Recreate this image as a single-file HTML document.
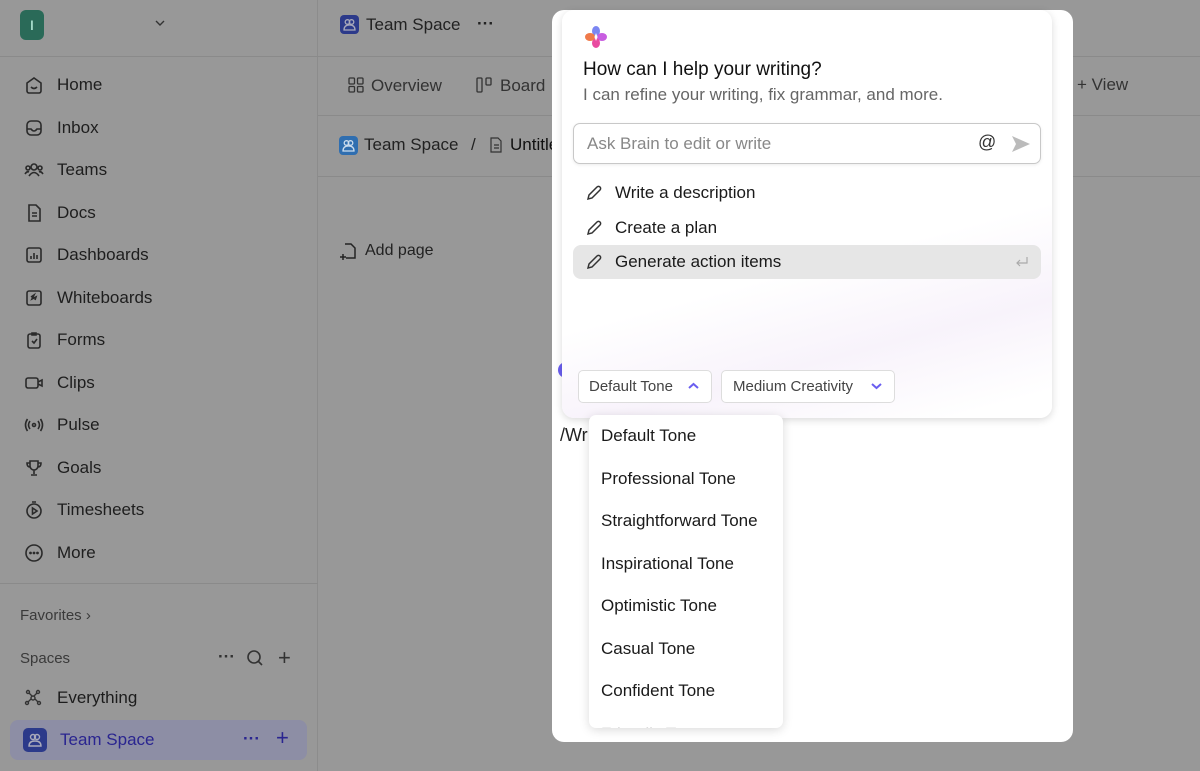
<!DOCTYPE html>
<html><head><style>
*{margin:0;padding:0;box-sizing:border-box}
body{width:1200px;height:771px;overflow:hidden;background:#989898;font-family:"Liberation Sans",sans-serif;color:#1c1c1c;position:relative}
.abs{position:absolute}
.sb{left:0;top:0;width:318px;height:771px;border-right:1px solid #8c8c8c}
.nav{position:absolute;left:24px;font-size:17px;display:flex;align-items:center;gap:13px;color:#1e1e1e}
.nav svg{width:20px;height:20px;fill:none;stroke:#2a2a2a;stroke-width:1.6}
.hl{position:absolute;height:1px;background:#8a8a8a}
.drop div{height:42.5px;line-height:42.5px;padding-left:12px;font-size:17px;color:#1a1a1a}
.pen{width:18px;height:18px;fill:none;stroke:#333;stroke-width:1.5}
.sug{position:absolute;left:573px;width:468px;height:34px;display:flex;align-items:center;gap:12px;padding-left:12px;font-size:17px;color:#1a1a1a}
</style></head><body>
<div class="abs sb"></div>
<div class="abs" style="left:20px;top:10px;width:24px;height:30px;background:#2a6a58;border-radius:6px;color:#cfe;font-size:14px;text-align:center;line-height:30px">I</div>
<svg class="abs" style="left:154px;top:19px" width="12" height="8" fill="none" stroke="#333" stroke-width="1.4"><path d="M2 2l4 4 4-4"/></svg>
<div class="hl" style="left:0;top:56px;width:318px"></div>
<div class="nav" style="top:75px"><svg viewBox="0 0 20 20"><path d="M3 8l7-5 7 5v8a2 2 0 01-2 2H5a2 2 0 01-2-2z"/><path d="M7 12q3 3 6 0"/></svg>Home</div>
<div class="nav" style="top:118px"><svg viewBox="0 0 20 20"><rect x="3" y="3" width="14" height="14" rx="4"/><path d="M3 11h4q3 4 6 0h4"/></svg>Inbox</div>
<div class="nav" style="top:160px"><svg viewBox="0 0 20 20"><circle cx="10" cy="7" r="3"/><circle cx="4" cy="8" r="2"/><circle cx="16" cy="8" r="2"/><path d="M5 16q5-7 10 0M1 14q2-3 4-2M19 14q-2-3-4-2"/></svg>Teams</div>
<div class="nav" style="top:203px"><svg viewBox="0 0 20 20"><path d="M5 2h7l4 4v12H5z"/><path d="M8 10h5M8 13h5"/></svg>Docs</div>
<div class="nav" style="top:245px"><svg viewBox="0 0 20 20"><rect x="3" y="3" width="14" height="14" rx="2"/><path d="M7 14v-3M10 14V8M13 14v-4"/></svg>Dashboards</div>
<div class="nav" style="top:288px"><svg viewBox="0 0 20 20"><rect x="3" y="3" width="14" height="14" rx="2"/><path d="M7 9l3-2-2 4 4-2-1 3"/></svg>Whiteboards</div>
<div class="nav" style="top:330px"><svg viewBox="0 0 20 20"><rect x="4" y="4" width="12" height="14" rx="2"/><path d="M8 3h4v2H8zM8 11l2 2 3-4"/></svg>Forms</div>
<div class="nav" style="top:373px"><svg viewBox="0 0 20 20"><rect x="2" y="5" width="12" height="10" rx="2"/><path d="M14 9l4-2v6l-4-2"/></svg>Clips</div>
<div class="nav" style="top:415px"><svg viewBox="0 0 20 20"><circle cx="10" cy="10" r="1.5"/><path d="M6 6q-3 4 0 8M14 6q3 4 0 8M3.5 4q-4 6 0 12M16.5 4q4 6 0 12"/></svg>Pulse</div>
<div class="nav" style="top:458px"><svg viewBox="0 0 20 20"><path d="M6 3h8v5a4 4 0 01-8 0zM6 5H3q0 4 3 4M14 5h3q0 4-3 4M10 12v4M7 17h6"/></svg>Goals</div>
<div class="nav" style="top:500px"><svg viewBox="0 0 20 20"><circle cx="10" cy="11" r="7"/><path d="M8.5 8v6l4.5-3zM8 2h4"/></svg>Timesheets</div>
<div class="nav" style="top:543px"><svg viewBox="0 0 20 20"><circle cx="10" cy="10" r="8"/><circle cx="6.5" cy="10" r=".6" fill="#2a2a2a"/><circle cx="10" cy="10" r=".6" fill="#2a2a2a"/><circle cx="13.5" cy="10" r=".6" fill="#2a2a2a"/></svg>More</div>
<div class="hl" style="left:0;top:583px;width:318px"></div>
<div class="abs" style="left:20px;top:607px;font-size:15px;color:#3a3a3a">Favorites &#8250;</div>
<div class="abs" style="left:20px;top:650px;font-size:15px;color:#3a3a3a">Spaces</div>
<div class="abs" style="left:218px;top:647px;font-size:17px;color:#333;font-weight:bold">···</div>
<svg class="abs" style="left:246px;top:649px" width="18" height="18" fill="none" stroke="#333" stroke-width="1.6"><circle cx="8" cy="8" r="6"/><path d="M12 12l4 4"/></svg>
<div class="abs" style="left:278px;top:645px;font-size:22px;color:#333;font-weight:300">+</div>
<svg class="abs" style="left:24px;top:689px" width="18" height="18" fill="none" stroke="#333" stroke-width="1.4"><circle cx="9" cy="9" r="2"/><circle cx="4" cy="3" r="1.5"/><circle cx="14" cy="3" r="1.5"/><circle cx="3" cy="14" r="1.5"/><circle cx="15" cy="14" r="1.5"/><path d="M5 4l3 3M13 4l-3 3M4 13l3-3M14 13l-3-3"/></svg>
<div class="abs" style="left:57px;top:688px;font-size:17px">Everything</div>
<div class="abs" style="left:10px;top:720px;width:297px;height:40px;background:#8d8ea5;border-radius:8px"></div>
<div class="abs" style="left:23px;top:728px;width:24px;height:24px;background:#2c3a8a;border-radius:5px"></div>
<svg class="abs" style="left:27px;top:732px" width="16" height="16" fill="none" stroke="#aab" stroke-width="1.4"><circle cx="6" cy="5" r="2.5"/><circle cx="10" cy="5" r="2.5"/><path d="M2 14q0-5 6-5t6 5z"/></svg>
<div class="abs" style="left:60px;top:730px;font-size:17px;color:#2a2590">Team Space</div>
<div class="abs" style="left:243px;top:729px;font-size:17px;color:#2a2590;font-weight:bold">···</div>
<div class="abs" style="left:276px;top:725px;font-size:22px;color:#2a2590;font-weight:300">+</div>

<div class="hl" style="left:318px;top:56px;width:882px"></div>
<div class="hl" style="left:318px;top:115px;width:882px"></div>
<div class="hl" style="left:318px;top:176px;width:882px"></div>
<div class="abs" style="left:340px;top:15px;width:19px;height:19px;background:#2c3a8a;border-radius:4px"></div>
<svg class="abs" style="left:342px;top:17px" width="15" height="15" fill="none" stroke="#aab" stroke-width="1.3"><circle cx="5.5" cy="5" r="2.3"/><circle cx="9.5" cy="5" r="2.3"/><path d="M2 13q0-5 5.5-5t5.5 5z"/></svg>
<div class="abs" style="left:366px;top:15px;font-size:17px;color:#222">Team Space</div>
<div class="abs" style="left:477px;top:14px;font-size:17px;color:#222;font-weight:bold">···</div>
<svg class="abs" style="left:348px;top:77px" width="16" height="16" fill="none" stroke="#333" stroke-width="1.3"><rect x="1" y="1" width="5.5" height="6" rx="1"/><rect x="9.5" y="1" width="5.5" height="6" rx="1"/><rect x="1" y="9.5" width="5.5" height="5.5" rx="1"/><rect x="9.5" y="9.5" width="5.5" height="5.5" rx="1"/></svg>
<div class="abs" style="left:371px;top:76px;font-size:17px;color:#333">Overview</div>
<svg class="abs" style="left:476px;top:77px" width="18" height="16" fill="none" stroke="#333" stroke-width="1.3"><rect x="1" y="1" width="5" height="14" rx="1"/><rect x="10" y="1" width="5" height="7" rx="1"/></svg>
<div class="abs" style="left:500px;top:76px;font-size:17px;color:#333">Board</div>
<div class="abs" style="left:1056px;top:75px;width:1px;height:22px;background:#888"></div>
<div class="abs" style="left:1077px;top:75px;font-size:17px;color:#333">+ View</div>
<div class="abs" style="left:339px;top:136px;width:19px;height:19px;background:#2f6eb0;border-radius:4px"></div>
<svg class="abs" style="left:341px;top:138px" width="15" height="15" fill="none" stroke="#cde" stroke-width="1.3"><circle cx="5.5" cy="5" r="2.3"/><circle cx="9.5" cy="5" r="2.3"/><path d="M2 13q0-5 5.5-5t5.5 5z"/></svg>
<div class="abs" style="left:364px;top:135px;font-size:17px;color:#222">Team Space</div>
<div class="abs" style="left:471px;top:135px;font-size:17px;color:#222">/</div>
<svg class="abs" style="left:489px;top:137px" width="14" height="16" fill="none" stroke="#333" stroke-width="1.2"><path d="M2 1h7l3 3v11H2zM5 8h5M5 11h5"/></svg>
<div class="abs" style="left:510px;top:135px;font-size:17px;color:#111">Untitle</div>
<svg class="abs" style="left:340px;top:242px" width="18" height="18" fill="none" stroke="#222" stroke-width="1.5"><path d="M5 2h6l4 4v10H6M3 12v6M0 15h6"/></svg>
<div class="abs" style="left:365px;top:242px;font-size:16px;color:#222">Add page</div>

<!-- modal -->
<div class="abs" style="left:552px;top:10px;width:521px;height:732px;background:#fff;border-radius:12px"></div>
<div class="abs" style="left:558px;top:362px;width:8px;height:16px;border-radius:8px 0 0 8px;background:#6a5ef0"></div>
<div class="abs" style="left:560px;top:425px;font-size:18px;color:#222">/Wr</div>
<div class="abs" style="left:562px;top:10px;width:490px;height:408px;background:linear-gradient(165deg,#fff 60%,#f8f3fb 78%,#fff 95%);border-radius:12px;box-shadow:0 2px 8px rgba(0,0,0,.15)"></div>
<svg class="abs" style="left:584px;top:25px" width="24" height="24"><ellipse cx="12" cy="6" rx="4" ry="5" fill="#7b86f2"/><ellipse cx="18" cy="12" rx="5" ry="4" fill="#c85de0"/><ellipse cx="12" cy="18" rx="4" ry="5" fill="#e94ba0"/><ellipse cx="6" cy="12" rx="5" ry="4" fill="#f07a4a"/><path d="M12 8l1.5 4L12 16l-1.5-4z" fill="#fff"/></svg>
<div class="abs" style="left:583px;top:59px;font-size:19px;color:#111">How can I help your writing?</div>
<div class="abs" style="left:583px;top:85px;font-size:17px;color:#666">I can refine your writing, fix grammar, and more.</div>
<div class="abs" style="left:573px;top:123px;width:468px;height:41px;border:1px solid #c8c8c8;border-radius:7px;box-shadow:0 1px 3px rgba(0,0,0,.08);background:#fff"></div>
<div class="abs" style="left:587px;top:134px;font-size:17px;color:#888">Ask Brain to edit or write</div>
<div class="abs" style="left:978px;top:132px;font-size:18px;color:#333">@</div>
<svg class="abs" style="left:1011px;top:135px" width="20" height="18"><path d="M1 1l18 8-18 8 4-8z" fill="#bbb"/></svg>
<div class="sug" style="top:176px"><svg class="pen" viewBox="0 0 18 18"><path d="M3 15l1-4 8-8a2 2 0 013 3l-8 8z"/></svg>Write a description</div>
<div class="sug" style="top:211px"><svg class="pen" viewBox="0 0 18 18"><path d="M3 15l1-4 8-8a2 2 0 013 3l-8 8z"/></svg>Create a plan</div>
<div class="sug" style="top:245px;background:#e6e6e6;border-radius:8px"><svg class="pen" viewBox="0 0 18 18"><path d="M3 15l1-4 8-8a2 2 0 013 3l-8 8z"/></svg>Generate action items<svg style="position:absolute;right:12px;top:11px" width="14" height="12" fill="none" stroke="#aaa" stroke-width="1.2"><path d="M12 1v6H2M5 4L2 7l3 3"/></svg></div>
<div class="abs" style="left:578px;top:370px;width:134px;height:33px;border:1px solid #ddd;border-radius:5px;font-size:15px;color:#444;line-height:31px;padding-left:10px;background:#fff">Default Tone</div>
<svg class="abs" style="left:688px;top:382px" width="11" height="8" fill="none" stroke="#6a5ef0" stroke-width="2"><path d="M1 6l4.5-4 4.5 4"/></svg>
<div class="abs" style="left:721px;top:370px;width:174px;height:33px;border:1px solid #ddd;border-radius:5px;font-size:15px;color:#444;line-height:31px;padding-left:11px;background:#fff">Medium Creativity</div>
<svg class="abs" style="left:871px;top:382px" width="11" height="8" fill="none" stroke="#6a5ef0" stroke-width="2"><path d="M1 2l4.5 4 4.5-4"/></svg>
<div class="abs drop" style="left:589px;top:415px;width:194px;height:313px;background:#fff;border-radius:7px;box-shadow:0 2px 10px rgba(0,0,0,.15);overflow:hidden">
<div>Default Tone</div><div>Professional Tone</div><div>Straightforward Tone</div><div>Inspirational Tone</div><div>Optimistic Tone</div><div>Casual Tone</div><div>Confident Tone</div><div style="color:#ddd">Friendly Tone</div>
</div>
</body></html>
